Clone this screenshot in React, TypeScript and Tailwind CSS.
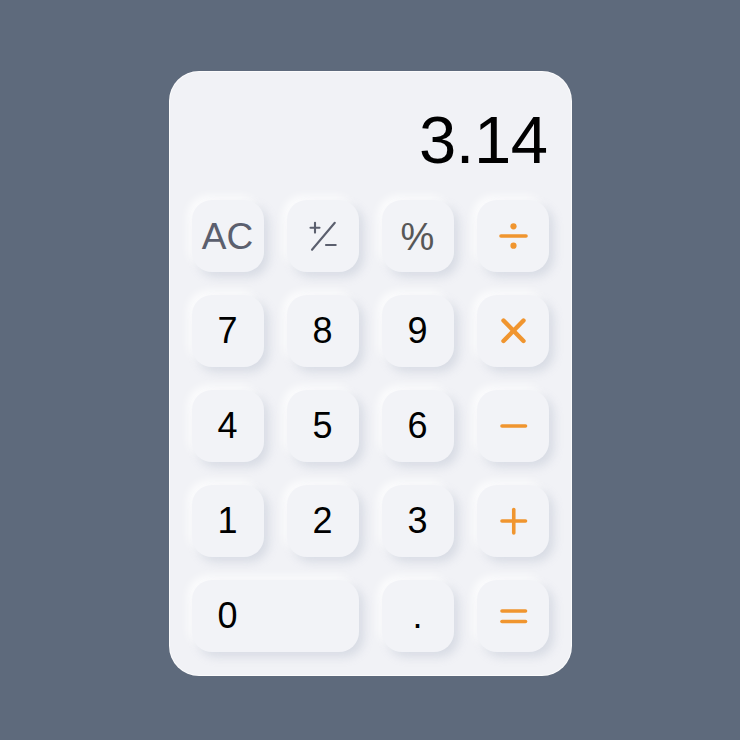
import React from "react";

const ORANGE = "#f0952f";

function Btn({ children, wide = false }: { children: React.ReactNode; wide?: boolean }) {
  return (
    <button
      className={
        (wide ? "col-span-2 justify-start " : "justify-center ") +
        "h-[72px] rounded-[20px] bg-[#f2f3f7] flex items-center text-[36px] leading-none text-black shadow-[5px_5px_10px_rgba(160,170,190,0.3),-4px_-4px_9px_rgba(255,255,255,0.85)]"
      }
    >
      {children}
    </button>
  );
}

function Op({ kind }: { kind: string }) {
  return (
    <svg width="72" height="72" viewBox="0 0 72 72" fill="none" stroke={ORANGE} strokeLinecap="round">
      {kind === "div" && (
        <>
          <line x1="24" y1="36" x2="49" y2="36" strokeWidth="3.6" />
          <circle cx="36.5" cy="26.3" r="3.1" fill={ORANGE} stroke="none" />
          <circle cx="36.5" cy="45.7" r="3.1" fill={ORANGE} stroke="none" />
        </>
      )}
      {kind === "mul" && (
        <>
          <line x1="26.5" y1="25.5" x2="46.5" y2="46" strokeWidth="4.4" />
          <line x1="46.5" y1="25.5" x2="26.5" y2="46" strokeWidth="4.4" />
        </>
      )}
      {kind === "sub" && <line x1="25" y1="36" x2="48.5" y2="36" strokeWidth="3.6" />}
      {kind === "add" && (
        <>
          <line x1="25" y1="36" x2="48.5" y2="36" strokeWidth="3.6" />
          <line x1="36.75" y1="24.5" x2="36.75" y2="48" strokeWidth="3.6" />
        </>
      )}
      {kind === "eq" && (
        <>
          <line x1="25" y1="31" x2="48.5" y2="31" strokeWidth="3.6" />
          <line x1="25" y1="41.5" x2="48.5" y2="41.5" strokeWidth="3.6" />
        </>
      )}
    </svg>
  );
}

function PlusMinus() {
  return (
    <svg width="72" height="72" viewBox="0 0 72 72" fill="none" stroke="#5b5f6e" strokeWidth="2.1" strokeLinecap="round">
      <line x1="23.5" y1="27.7" x2="32.5" y2="27.7" />
      <line x1="28" y1="22.8" x2="28" y2="32.6" />
      <line x1="25" y1="49.8" x2="47.8" y2="22.8" />
      <line x1="39" y1="45" x2="48.7" y2="45" />
    </svg>
  );
}

export default function App() {
  return (
    <div
      className="w-full min-h-[740px] bg-[#5e6a7c] flex justify-center items-start pt-[71px]"
      style={{ fontFamily: '"Liberation Sans", Arial, Helvetica, sans-serif' }}
    >
      <div className="w-[403px] rounded-[30px] bg-[#f1f2f6] border border-white/70 px-[22px] pt-[34px] pb-[23px]">
        <div className="h-[66px] text-right text-[67px] leading-none text-black pr-[1px] tracking-[-0.5px]">3.14</div>
        <div className="mt-[28px] grid grid-cols-4 gap-[23px]">
          <Btn>
            <span className="text-[#5b5f6e] text-[37px]">AC</span>
          </Btn>
          <Btn>
            <PlusMinus />
          </Btn>
          <Btn>
            <span className="text-[#575757] text-[38px] pt-[2px]">%</span>
          </Btn>
          <Btn>
            <Op kind="div" />
          </Btn>

          <Btn>7</Btn>
          <Btn>8</Btn>
          <Btn>9</Btn>
          <Btn>
            <Op kind="mul" />
          </Btn>

          <Btn>4</Btn>
          <Btn>5</Btn>
          <Btn>6</Btn>
          <Btn>
            <Op kind="sub" />
          </Btn>

          <Btn>1</Btn>
          <Btn>2</Btn>
          <Btn>3</Btn>
          <Btn>
            <Op kind="add" />
          </Btn>

          <Btn wide>
            <span className="w-[72px] text-center">0</span>
          </Btn>
          <Btn>.</Btn>
          <Btn>
            <Op kind="eq" />
          </Btn>
        </div>
      </div>
    </div>
  );
}
